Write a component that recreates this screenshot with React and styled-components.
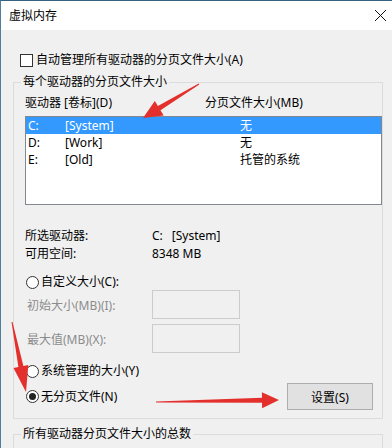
import React from 'react';
import styled, { createGlobalStyle } from 'styled-components';

const GlobalStyle = createGlobalStyle`
    body {
        margin: 0;
        font-family: "Noto Sans", "Noto Sans CJK SC", sans-serif;
        font-size: 12px;
        color: #000;
        background: #f0f0f0;
    }
`;

const Window = styled.div`
    position: relative;
    width: 392px;
    height: 448px;
    box-sizing: border-box;
    border-top: 1px solid #35627f;
    border-left: 1px solid #4f7f9c;
    background: #f0f0f0;
    overflow: hidden;
`;

const TitleBar = styled.div`
    height: 29px;
    background: #fff;
    display: flex;
    align-items: center;
    justify-content: space-between;
    padding: 0 5px 0 8px;
    font-size: 12px;
    line-height: 16px;
`;

const CloseBtn = styled.div`
    width: 14px;
    height: 14px;
    display: flex;
    align-items: center;
    justify-content: center;
    margin-top: -1px;
`;

const Body = styled.div`
    padding-top: 22px;
`;

const CheckRow = styled.label`
    display: flex;
    align-items: center;
    height: 16px;
    margin-left: 19px;
    line-height: 16px;
`;

const CheckBox = styled.span`
    width: 13px;
    height: 13px;
    box-sizing: border-box;
    border: 1px solid #333;
    background: #fff;
    margin-right: 3px;
`;

const Group = styled.fieldset`
    margin: ${p => p.top}px 0 0 12px;
    width: 370px;
    box-sizing: border-box;
    border: 1px solid #dcdcdc;
    padding: 0 0 8px 0;
    min-width: 0;
`;

const Legend = styled.legend`
    margin-left: 7px;
    padding: 0 2px;
    line-height: 16px;
    font-size: 12px;
`;

const Header = styled.div`
    display: grid;
    grid-template-columns: 180px 1fr;
    margin: 5px 0 0 11px;
    height: 16px;
    line-height: 16px;
`;

const ListBox = styled.div`
    margin: 5px 0 0 11px;
    width: 357px;
    height: 89px;
    box-sizing: border-box;
    border: 1px solid #828790;
    background: #fff;
`;

const ListRow = styled.div`
    display: grid;
    grid-template-columns: 37px 175px 1fr;
    height: 17px;
    line-height: 17px;
    padding-left: 2px;
    background: ${p => (p.selected ? '#3399ff' : 'transparent')};
    color: ${p => (p.selected ? '#fff' : '#000')};
`;

const InfoRow = styled.div`
    display: grid;
    grid-template-columns: 127px 1fr;
    margin: ${p => p.top}px 0 0 11px;
    height: 16px;
    line-height: 16px;
`;

const DriveTag = styled.span`
    margin-left: 9px;
`;

const RadioRow = styled.label`
    display: flex;
    align-items: center;
    margin: ${p => p.top}px 0 0 12px;
    height: 16px;
    line-height: 16px;
`;

const Radio = styled.span`
    width: 13px;
    height: 13px;
    box-sizing: border-box;
    border: 1px solid #333;
    border-radius: 50%;
    background: #fff;
    margin-right: 2px;
    display: flex;
    align-items: center;
    justify-content: center;
    &::after {
        content: '';
        width: 7px;
        height: 7px;
        border-radius: 50%;
        background: ${p => (p.checked ? '#222' : 'transparent')};
    }
`;

const FieldRow = styled.div`
    display: grid;
    grid-template-columns: 125px 88px;
    align-items: center;
    margin: ${p => p.top}px 0 0 13px;
    height: 29px;
    color: #8c8c8c;
`;

const TextBox = styled.div`
    height: 29px;
    box-sizing: border-box;
    border: 1px solid #cccccc;
    background: #f0f0f0;
`;

const BottomRow = styled.div`
    display: flex;
    align-items: center;
    justify-content: space-between;
    margin: 4px 9px 0 0;
    height: 27px;
`;

const Button = styled.div`
    width: 86px;
    height: 27px;
    box-sizing: border-box;
    border: 1px solid #adadad;
    background: #e1e1e1;
    display: flex;
    align-items: center;
    justify-content: center;
`;

const Overlay = styled.svg`
    position: absolute;
    left: -1px;
    top: -1px;
    pointer-events: none;
`;

function arrowPoints(x1, y1, x2, y2, hl, hw, tw, nw) {
    const dx = x2 - x1;
    const dy = y2 - y1;
    const len = Math.hypot(dx, dy);
    const ux = dx / len;
    const uy = dy / len;
    const px = -uy;
    const py = ux;
    const bx = x2 - ux * hl;
    const by = y2 - uy * hl;
    const pts = [
        [x1 + px * tw / 2, y1 + py * tw / 2],
        [bx + px * nw / 2, by + py * nw / 2],
        [bx + px * hw / 2, by + py * hw / 2],
        [x2, y2],
        [bx - px * hw / 2, by - py * hw / 2],
        [bx - px * nw / 2, by - py * nw / 2],
        [x1 - px * tw / 2, y1 - py * tw / 2],
    ];
    return pts.map(p => p[0].toFixed(1) + ',' + p[1].toFixed(1)).join(' ');
}

const drives = [
    { letter: 'C:', label: '[System]', size: '无', selected: true },
    { letter: 'D:', label: '[Work]', size: '无' },
    { letter: 'E:', label: '[Old]', size: '托管的系统' },
];

export default function App() {
    return (
        <Window>
            <GlobalStyle />
            <TitleBar>
                <span>虚拟内存</span>
                <CloseBtn>
                    <svg width="13" height="13" viewBox="0 0 13 13">
                        <path d="M1 1 L12 12 M12 1 L1 12" stroke="#111" strokeWidth="1" fill="none" />
                    </svg>
                </CloseBtn>
            </TitleBar>
            <Body>
                <CheckRow>
                    <CheckBox />
                    自动管理所有驱动器的分页文件大小(A)
                </CheckRow>
                <Group top={6}>
                    <Legend>每个驱动器的分页文件大小</Legend>
                    <Header>
                        <span>驱动器 [卷标](D)</span>
                        <span>分页文件大小(MB)</span>
                    </Header>
                    <ListBox>
                        {drives.map(d => (
                            <ListRow key={d.letter} selected={d.selected}>
                                <span>{d.letter}</span>
                                <span>{d.label}</span>
                                <span>{d.size}</span>
                            </ListRow>
                        ))}
                    </ListBox>
                    <InfoRow top={23}>
                        <span>所选驱动器:</span>
                        <span>C:<DriveTag>[System]</DriveTag></span>
                    </InfoRow>
                    <InfoRow top={2}>
                        <span>可用空间:</span>
                        <span>8348 MB</span>
                    </InfoRow>
                    <RadioRow top={12}>
                        <Radio />
                        自定义大小(C):
                    </RadioRow>
                    <FieldRow top={0}>
                        <span>初始大小(MB)(I):</span>
                        <TextBox />
                    </FieldRow>
                    <FieldRow top={5}>
                        <span>最大值(MB)(X):</span>
                        <TextBox />
                    </FieldRow>
                    <RadioRow top={10}>
                        <Radio />
                        系统管理的大小(Y)
                    </RadioRow>
                    <BottomRow>
                        <RadioRow top={0}>
                            <Radio checked />
                            无分页文件(N)
                        </RadioRow>
                        <Button>设置(S)</Button>
                    </BottomRow>
                </Group>
                <Group top={7}>
                    <Legend>所有驱动器分页文件大小的总数</Legend>
                    <div style={{ height: 40 }} />
                </Group>
            </Body>
            <Overlay width="392" height="448" viewBox="0 0 392 448">
                <polygon points={arrowPoints(199, 84, 143, 118, 19, 17, 1, 5)} fill="#e3302c" />
                <polygon points={arrowPoints(12, 322, 26, 392, 26, 15, 1, 5)} fill="#e3302c" />
                <polygon points={arrowPoints(156, 402, 279, 400, 17, 16, 1, 5)} fill="#e3302c" />
            </Overlay>
        </Window>
    );
}
